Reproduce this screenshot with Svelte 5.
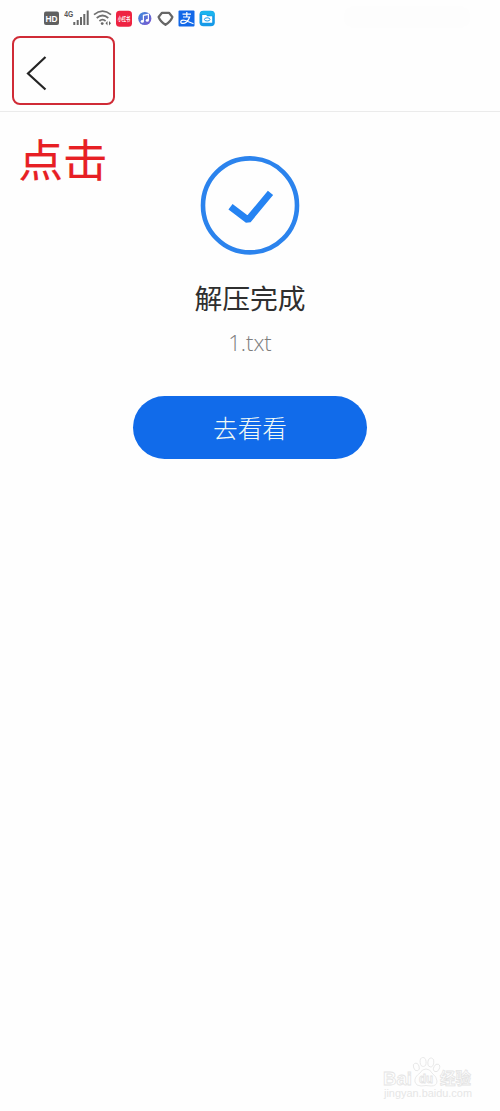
<script>
  const toes = [
    [11, 10, 2.8, 4, -20], [18, 5, 3, 4.5, -5], [26, 5.5, 3, 4.5, 10], [32, 11, 2.8, 4, 25]
  ];
</script>

<main class="screen">
  <header>
    <div class="status">
      <svg width="180" height="20" viewBox="40 8 180 20" aria-label="状态栏">
        <rect x="44" y="11.5" width="15" height="13.5" rx="2" fill="#606060" />
        <text x="45.5" y="21.8" class="hd" textLength="12" lengthAdjust="spacingAndGlyphs">HD</text>
        <text x="64.3" y="17.3" class="net" textLength="9" lengthAdjust="spacingAndGlyphs">4G</text>
        <path d="M74.3 22v3M77.7 20v5M81 17v8M84.3 14v11M87.7 10.5v14.5" stroke="#686868" stroke-width="2" />
        <g fill="none" stroke="#707070" stroke-width="1.7">
          <path d="M94 14.7q8.5-7 17 0M96.7 18q5.8-5 11.6 0M99.4 21q3.1-2.8 6.2 0" />
        </g>
        <circle cx="102.2" cy="23.6" r="1.4" fill="#666" />
        <path d="M107.5 21l-2 2.2 2 2.2zM109 21l2 2.2-2 2.2z" fill="#666" />
        <rect x="116" y="10.7" width="16" height="16" rx="3.5" fill="#ee2342" />
        <text x="117.8" y="21.2" class="red" textLength="12.5" lengthAdjust="spacingAndGlyphs">小红书</text>
        <defs>
          <linearGradient id="music" x1="0" y1="0" x2="1" y2="1">
            <stop offset="0" stop-color="#3a8ddd" /><stop offset="1" stop-color="#7d55cf" />
          </linearGradient>
        </defs>
        <circle cx="144.8" cy="18.5" r="6.6" fill="url(#music)" />
        <path d="M143.4 21.3v-6l5-1v5.8" fill="none" stroke="#fff" stroke-width="1.2" />
        <ellipse cx="142.3" cy="21.4" rx="1.6" ry="1.3" fill="#fff" />
        <ellipse cx="147.3" cy="20.4" rx="1.6" ry="1.3" fill="#fff" />
        <path d="M162 12.8h7l3.4 4.2q-1.8 4.6-6.9 7.8-5.1-3.2-6.9-7.8z" fill="none" stroke="#666" stroke-width="2.2" stroke-linejoin="round" />
        <rect x="178.5" y="10.5" width="16" height="16" rx="1" fill="#1268e8" />
        <path d="M182.5 14.2h8.5M186.8 12v5M183 17h6.6q-.8 3-3 5-2.2 1.7-4.2 1.4-2.2-.5-1.5-2.2 1.2-1.8 4.6-.7l8 3.2" fill="none" stroke="#fff" stroke-width="1.2" />
        <rect x="199.5" y="10.7" width="15.3" height="15.5" rx="4" fill="#159ae8" />
        <path d="M200 14q0-3 3.5-3h7q4 0 4 3v2z" fill="#1ab4ee" />
        <path d="M202.2 15h4l1 1.2h5v6.5h-10z" fill="#fff" />
        <ellipse cx="207.2" cy="19.4" rx="2.8" ry="1.6" fill="none" stroke="#1697e8" stroke-width="1" />
      </svg>
      <span class="smudge"></span>
    </div>
    <button class="back" aria-label="返回">
      <svg width="24" height="38" viewBox="0 0 24 38">
        <path d="M20.5 3L3 19.5l17.5 16" fill="none" stroke="#242424" stroke-width="2.2" />
      </svg>
    </button>
  </header>

  <section class="result">
    <div class="hint">点击</div>
    <svg class="done" width="100" height="100" viewBox="0 0 100 100">
      <circle cx="50" cy="50.4" r="47" fill="none" stroke="#2b83ed" stroke-width="4.6" />
      <path d="M30.5 51.7L48 65L70.5 37.8" fill="none" stroke="#2583f2" stroke-width="6.8" stroke-linejoin="bevel" />
    </svg>
    <h1>解压完成</h1>
    <p>1.txt</p>
    <button class="go">去看看</button>
  </section>

  <footer>
    <svg width="96" height="46" viewBox="0 0 96 46">
      <g fill="#fefefe" stroke="#e4e4e4" stroke-width="0.8">
        <text x="0" y="29" class="brand" textLength="29" lengthAdjust="spacingAndGlyphs">Bai</text>
        <g transform="translate(22 0)">
          {#each toes as [x, y, rx, ry, turn]}
            <ellipse cx={x} cy={y + 1} {rx} {ry} transform={`rotate(${turn} ${x} ${y})`} />
          {/each}
          <path d="M21 13q-4 0-6 4-6 4-5 9 1 4 6 4 5-1 10 0 6 0 6-5 0-4-5-8-2-4-6-4z" />
        </g>
        <text x="36" y="27" class="du" textLength="14" lengthAdjust="spacingAndGlyphs">du</text>
        <text x="57" y="28" class="exp" textLength="31" lengthAdjust="spacingAndGlyphs">经验</text>
      </g>
      <text x="1" y="41" class="site" textLength="88" lengthAdjust="spacingAndGlyphs">jingyan.baidu.com</text>
    </svg>
  </footer>
</main>

<style>
  :global(body) { background: #fefefe; }
  .screen {
    width: 500px;
    height: 1111px;
    box-sizing: border-box;
    display: flex;
    flex-direction: column;
    overflow: hidden;
    background: #fefefe;
    font-family: "Noto Sans CJK SC", sans-serif;
  }
  header {
    height: 112px;
    box-sizing: border-box;
    border-bottom: 1px solid #ebebeb;
    flex: none;
  }
  .status {
    display: flex;
    justify-content: space-between;
    height: 28px;
    padding: 8px 30px 0 40px;
  }
  .status svg { display: block; }
  .smudge {
    width: 126px;
    height: 22px;
    margin-top: -2px;
    border-radius: 12px;
    background: #fdfdfd;
  }
  .hd { font: 700 9px "Liberation Sans", sans-serif; fill: #fff; }
  .net { font: 700 9.5px "Liberation Sans", sans-serif; fill: #555; }
  .red { font: 700 5.5px "Noto Sans CJK SC", sans-serif; fill: #fff; }
  .back {
    display: flex;
    align-items: center;
    width: 103px;
    height: 69px;
    margin: 0 0 0 12px;
    padding: 0 0 5px 11px;
    box-sizing: border-box;
    border: 2px solid #d02b36;
    border-radius: 8px;
    background: transparent;
  }
  .back svg { margin-top: 9px; }
  .result {
    display: flex;
    flex-direction: column;
    align-items: center;
    flex: 1;
  }
  .hint {
    align-self: flex-start;
    height: 43px;
    margin: 24px 0 -24px 18.5px;
    font-size: 44.5px;
    line-height: 43px;
    color: #e71f24;
    -webkit-text-stroke: 0.2px #e71f24;
  }
  .done { display: block; flex: none; }
  h1 {
    margin: 21px 0 0;
    font-size: 27.8px;
    font-weight: 400;
    line-height: 42px;
    color: #2f2f2f;
  }
  p {
    margin: 9px 0 0;
    font: 300 22px/30px "Open Sans", sans-serif;
    color: #7d7d7d;
  }
  .go {
    width: 234px;
    height: 63px;
    margin-top: 39px;
    padding: 0;
    border: 0;
    border-radius: 32px;
    background: #116bea;
    color: #eff9f5;
    font: 300 24.7px/63px "Noto Sans CJK SC", sans-serif;
  }
  footer {
    display: flex;
    justify-content: flex-end;
    padding: 0 21px 9px 0;
  }
  .brand { font: 700 19px "Liberation Sans", sans-serif; }
  .du { font: 700 12px "Liberation Sans", sans-serif; }
  .exp { font: 700 16px "Noto Sans CJK SC", sans-serif; }
  .site { font: 10px "Liberation Sans", sans-serif; fill: #e6e6e6; }
</style>
